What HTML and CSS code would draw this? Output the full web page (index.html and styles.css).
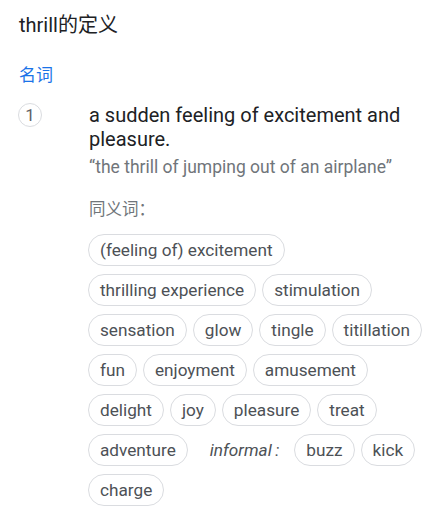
FILE: index.html
```html
<!DOCTYPE html>
<html>
<head>
<meta charset="utf-8">
<link rel="stylesheet" href="styles.css">
</head>
<body>
<div class="page">
  <div class="title">thrill的定义</div>
  <div class="pos">名词</div>
  <div class="sense">
    <div class="num">1</div>
    <div class="body">
      <div class="def">a sudden feeling of excitement and pleasure.</div>
      <div class="example">“the thrill of jumping out of an airplane”</div>
      <div class="synlabel">同义词：</div>
      <div class="chips">
        <span class="chip">(feeling of) excitement</span>
        <span class="chip">thrilling experience</span>
        <span class="chip">stimulation</span>
        <span class="chip">sensation</span>
        <span class="chip">glow</span>
        <span class="chip">tingle</span>
        <span class="chip">titillation</span>
        <span class="chip">fun</span>
        <span class="chip">enjoyment</span>
        <span class="chip">amusement</span>
        <span class="chip">delight</span>
        <span class="chip">joy</span>
        <span class="chip">pleasure</span>
        <span class="chip">treat</span>
        <span class="chip">adventure</span>
        <span class="label">informal&#8201;:</span>
        <span class="chip">buzz</span>
        <span class="chip">kick</span>
        <span class="chip">charge</span>
      </div>
    </div>
  </div>
</div>
</body>
</html>
```
FILE: styles.css
```css
html, body {
  margin: 0;
  padding: 0;
  background: #fff;
}
body {
  font-family: Roboto, "Noto Sans CJK SC", sans-serif;
  color: #202124;
}
.page {
  padding: 11px 9px 0 19px;
}
.title {
  font-size: 20px;
  line-height: 28px;
  color: #202124;
}
.pos {
  margin-top: 24px;
  font-size: 17px;
  line-height: 24px;
  color: #1a73e8;
}
.sense {
  display: flex;
  margin-top: 16px;
}
.num {
  flex: none;
  width: 24px;
  height: 24px;
  box-sizing: border-box;
  border: 1px solid #dadce0;
  border-radius: 50%;
  font-size: 17px;
  line-height: 22px;
  text-align: center;
  color: #5f6368;
  margin-left: -1px;
}
.body {
  margin-left: 47px;
  flex: 1;
}
.def {
  font-size: 20px;
  line-height: 24px;
  color: #202124;
  padding-right: 10px;
}
.example {
  font-size: 17.5px;
  line-height: 22px;
  color: #70757a;
  margin-top: 5px;
}
.synlabel {
  font-size: 16.5px;
  line-height: 22px;
  color: #70757a;
  margin-top: 21px;
}
.chips {
  display: flex;
  flex-wrap: wrap;
  align-items: center;
  gap: 8px 6px;
  margin-top: 13px;
  margin-left: -1px;
}
.chip {
  box-sizing: border-box;
  height: 32px;
  line-height: 30px;
  padding: 0 11px;
  border: 1px solid #dadce0;
  border-radius: 16px;
  font-size: 17.2px;
  color: #4d5156;
  white-space: nowrap;
}
.label {
  font-style: italic;
  font-size: 17.2px;
  color: #4d5156;
  margin: 0 9px 0 16px;
}
```
